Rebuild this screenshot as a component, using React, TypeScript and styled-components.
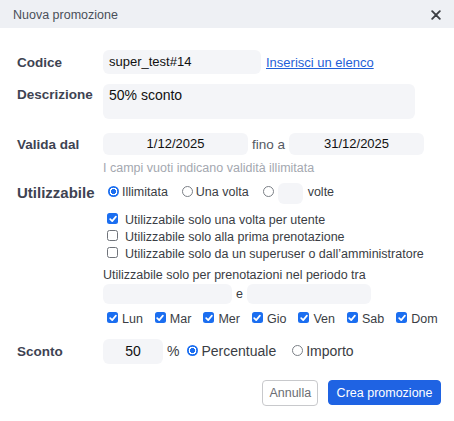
import React from 'react'
import styled, { createGlobalStyle } from 'styled-components'

const GlobalStyle = createGlobalStyle`
  html, body {
    margin: 0;
    padding: 0;
    background: #fff;
  }
  body {
    font-family: "Liberation Sans", Arial, sans-serif;
    color: #333;
  }
`

const Dialog = styled.div`
  width: 454px;
  height: 421px;
  background: #fff;
`

const Header = styled.div`
  height: 28px;
  background: #eef0f4;
  display: flex;
  align-items: center;
  justify-content: space-between;
  padding: 0 10px 0 13px;
`

const HeaderTitle = styled.span`
  font-size: 12.5px;
  color: #4a4f59;
  padding-top: 2px;
`

const Close = styled.span`
  display: flex;
  width: 16px;
  height: 16px;
  align-items: center;
  justify-content: center;
  margin-top: 2px;
`

const Form = styled.div`
  padding: 22px 13px 0 17px;
  display: flex;
  flex-direction: column;
`

const Row = styled.div<{ $top?: number; $align?: string }>`
  display: grid;
  grid-template-columns: 86px 1fr;
  align-items: ${(p) => p.$align || 'center'};
  margin-top: ${(p) => p.$top || 0}px;
`

const Label = styled.div<{ $size?: number; $pad?: number }>`
  font-size: ${(p) => p.$size || 13.5}px;
  font-weight: 700;
  color: #3e4352;
  padding-top: ${(p) => p.$pad || 0}px;
`

const Line = styled.div<{ $gap?: number; $top?: number; $h?: number }>`
  display: flex;
  align-items: center;
  gap: ${(p) => p.$gap || 0}px;
  margin-top: ${(p) => p.$top || 0}px;
  ${(p) => (p.$h ? `height: ${p.$h}px;` : '')}
`

const Field = styled.div<{ $w: number; $h: number; $size?: number; $center?: boolean }>`
  width: ${(p) => p.$w}px;
  height: ${(p) => p.$h}px;
  line-height: ${(p) => p.$h}px;
  background: #f4f5f8;
  border-radius: 6px;
  box-sizing: border-box;
  padding: 0 6px;
  font-size: ${(p) => p.$size || 13}px;
  color: #111;
  text-align: ${(p) => (p.$center ? 'center' : 'left')};
  white-space: nowrap;
  flex: none;
`

const Area = styled.div`
  width: 312px;
  height: 35px;
  background: #f4f5f8;
  border-radius: 6px;
  box-sizing: border-box;
  padding: 3px 6px;
  font-size: 14px;
  line-height: 17px;
  color: #111;
`

const Link = styled.a`
  font-size: 13px;
  color: #1f5fd8;
  text-decoration: underline;
  margin-left: 5px;
`

const Text = styled.span<{ $size?: number; $color?: string; $left?: number }>`
  font-size: ${(p) => p.$size || 13}px;
  color: ${(p) => p.$color || '#3a3d44'};
  margin-left: ${(p) => p.$left || 0}px;
  white-space: nowrap;
`

const Hint = styled.div`
  margin-top: 6px;
  font-size: 12.5px;
  line-height: 14px;
  color: #a4a8b0;
`

const Stack = styled.div<{ $top?: number }>`
  display: flex;
  flex-direction: column;
  margin-top: ${(p) => p.$top || 0}px;
`

const Radio = styled.span<{ $on?: boolean; $left?: number }>`
  display: inline-block;
  box-sizing: border-box;
  width: 11px;
  height: 11px;
  border-radius: 50%;
  margin: 0 3px 0 ${(p) => p.$left ?? 5}px;
  flex: none;
  border: ${(p) => (p.$on ? 'none' : '1px solid #7b7f86')};
  background: ${(p) =>
    p.$on
      ? 'radial-gradient(circle, #1b6ef0 0 2.3px, #fff 2.8px 3.6px, #1b6ef0 4.1px)'
      : '#fff'};
  position: relative;
  top: -1px;
`

const Box = styled.span<{ $on?: boolean }>`
  display: inline-flex;
  align-items: center;
  justify-content: center;
  box-sizing: border-box;
  width: 11px;
  height: 11px;
  border-radius: 2.5px;
  margin-left: 4px;
  flex: none;
  border: ${(p) => (p.$on ? 'none' : '1px solid #6f737a')};
  background: ${(p) => (p.$on ? '#1b6ef0' : '#fff')};
  position: relative;
  top: -1px;
`

const Option = styled.span<{ $gap?: number }>`
  display: inline-flex;
  align-items: center;
  margin-right: ${(p) => p.$gap || 0}px;
`

const CheckLine = styled.div<{ $h?: number; $top?: number }>`
  display: flex;
  align-items: center;
  height: ${(p) => p.$h || 17}px;
  margin-top: ${(p) => p.$top || 0}px;
  gap: 7px;
  font-size: 12.5px;
  color: #3a3d44;
  white-space: nowrap;
`

const Days = styled.div`
  display: flex;
  align-items: center;
  height: 17px;
  margin-top: 6.5px;
  gap: 8px;
`

const Day = styled.span`
  display: inline-flex;
  align-items: center;
  gap: 4px;
  font-size: 12.5px;
  color: #3a3d44;
`

const Footer = styled.div`
  display: flex;
  justify-content: flex-end;
  align-items: center;
  gap: 10px;
  margin-top: 16px;
`

const Button = styled.button<{ $primary?: boolean }>`
  font-family: inherit;
  font-size: 12.5px;
  height: ${(p) => (p.$primary ? 25 : 26)}px;
  padding: 0 ${(p) => (p.$primary ? 7.5 : 6)}px;
  border-radius: 4px;
  border: 1px solid ${(p) => (p.$primary ? '#1f63e3' : '#c8c9cc')};
  background: ${(p) => (p.$primary ? '#1f63e3' : '#fff')};
  color: ${(p) => (p.$primary ? '#fff' : '#6b6e74')};
`

const Tick = () => (
  <svg width="8" height="8" viewBox="0 0 8 8">
    <path d="M1.2 4.2 L3.2 6.1 L6.9 1.6" fill="none" stroke="#fff" strokeWidth="1.7" strokeLinecap="round" strokeLinejoin="round" />
  </svg>
)

const Check = ({ on }: { on?: boolean }) => <Box $on={on}>{on && <Tick />}</Box>

const days = ['Lun', 'Mar', 'Mer', 'Gio', 'Ven', 'Sab', 'Dom']

const App = () => (
  <Dialog>
    <GlobalStyle />
    <Header>
      <HeaderTitle>Nuova promozione</HeaderTitle>
      <Close>
        <svg width="10" height="10" viewBox="0 0 10 10">
          <path d="M1.2 1.2 L8.8 8.8 M8.8 1.2 L1.2 8.8" stroke="#3d3f44" strokeWidth="1.9" strokeLinecap="round" />
        </svg>
      </Close>
    </Header>
    <Form>
      <Row>
        <Label>Codice</Label>
        <Line>
          <Field $w={158} $h={24}>super_test#14</Field>
          <Link>Inserisci un elenco</Link>
        </Line>
      </Row>
      <Row $top={10} $align="start">
        <Label $pad={3}>Descrizione</Label>
        <Area>50% sconto</Area>
      </Row>
      <Row $top={14}>
        <Label>Valida dal</Label>
        <Line $gap={4}>
          <Field $w={145} $h={22} $center>1/12/2025</Field>
          <Text $size={13.5} $color="#555a63">fino a</Text>
          <Field $w={135} $h={22} $center>31/12/2025</Field>
        </Line>
      </Row>
      <Row>
        <div />
        <Hint>I campi vuoti indicano validità illimitata</Hint>
      </Row>
      <Row $top={6} $align="start">
        <Label $size={15} $pad={3}>Utilizzabile</Label>
        <Stack>
          <Line $h={22}>
            <Option $gap={9}>
              <Radio $on />
              <Text $size={12.5}>Illimitata</Text>
            </Option>
            <Option $gap={9}>
              <Radio />
              <Text $size={12.5}>Una volta</Text>
            </Option>
            <Option>
              <Radio />
              <Field $w={25} $h={21} style={{ marginLeft: 1, marginTop: 3 }} />
              <Text $size={12.5} $left={5}>volte</Text>
            </Option>
          </Line>
          <Stack $top={8}>
            <CheckLine><Check on />Utilizzabile solo una volta per utente</CheckLine>
            <CheckLine><Check />Utilizzabile solo alla prima prenotazione</CheckLine>
            <CheckLine><Check />Utilizzabile solo da un superuser o dall’amministratore</CheckLine>
          </Stack>
          <CheckLine $h={14} $top={5.5}>Utilizzabile solo per prenotazioni nel periodo tra</CheckLine>
          <Line $gap={4} $top={2}>
            <Field $w={129} $h={20} />
            <Text $size={12.5}>e</Text>
            <Field $w={124} $h={20} />
          </Line>
          <Days>
            {days.map((d) => (
              <Day key={d}>
                <Check on />
                {d}
              </Day>
            ))}
          </Days>
        </Stack>
      </Row>
      <Row $top={11.5}>
        <Label>Sconto</Label>
        <Line>
          <Field $w={60} $h={25} $size={14} $center>50</Field>
          <Text $size={14} $left={4}>%</Text>
          <Option $gap={11}>
            <Radio $on $left={8} />
            <Text $size={14}>Percentuale</Text>
          </Option>
          <Option>
            <Radio />
            <Text $size={14}>Importo</Text>
          </Option>
        </Line>
      </Row>
      <Footer>
        <Button>Annulla</Button>
        <Button $primary>Crea promozione</Button>
      </Footer>
    </Form>
  </Dialog>
)

export default App
